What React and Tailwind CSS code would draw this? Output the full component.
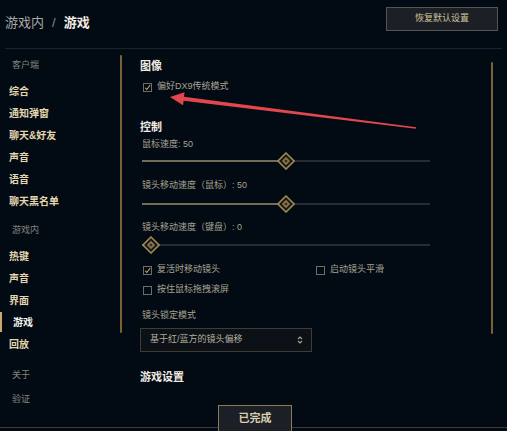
import React from 'react';

const Knob = () => (
    <svg width="18" height="18" viewBox="0 0 18 18" className="absolute top-1/2 -translate-y-1/2 -translate-x-1/2">
        <polygon points="9,1 17,9 9,17 1,9" fill="#15181c" stroke="#a08852" strokeWidth="1.6" />
        <polygon points="9,4.8 13.2,9 9,13.2 4.8,9" fill="#8a7242" />
        <polygon points="9,7.4 10.6,9 9,10.6 7.4,9" fill="#2a2620" />
    </svg>
);

const Slider = ({ value, className }) => (
    <div className={`relative h-[16px] w-[288px] ${className}`}>
        <div className="absolute left-0 right-0 top-1/2 h-[2px] -translate-y-1/2 bg-[#262b33]" />
        <div
            className="absolute left-0 top-1/2 h-[2px] -translate-y-1/2 bg-[#736c5a]"
            style={{ width: `calc(9px + ${value / 100} * (100% - 18px))` }}
        />
        <div className="absolute top-0 bottom-0" style={{ left: `calc(9px + ${value / 100} * (100% - 18px))` }}>
            <Knob />
        </div>
    </div>
);

const Checkbox = ({ checked, label, className = '' }) => (
    <div className={`flex items-center h-[18px] ${className}`}>
        <div className="w-[9px] h-[9px] border border-[#6f6d66] flex items-center justify-center ml-[3px]">
            {checked && (
                <svg width="9" height="9" viewBox="0 0 9 9">
                    <path d="M1.5 4.8 L3.6 7 L8 1.2" fill="none" stroke="#c9b35f" strokeWidth="1.3" />
                </svg>
            )}
        </div>
        <span className="ml-[5px] text-[9px] text-[#a8a392]">{label}</span>
    </div>
);

const NavHeader = ({ children, className = '' }) => (
    <div className={`h-[24px] flex items-center pl-[12px] text-[9px] text-[#85847e] ${className}`}>{children}</div>
);

const NavItem = ({ children, active }) => (
    <div className="relative h-[22px] flex items-center">
        {active && <div className="absolute left-0 top-[1px] bottom-[1px] w-[2px] bg-[#c8aa6e]" />}
        <span className={`text-[10px] font-bold ${active ? 'pl-[13px] text-[#f4f1ea]' : 'pl-[9px] text-[#e3d7b0]'}`}>{children}</span>
    </div>
);

const App = () => {
    return (
        <div className="relative w-[507px] h-[431px] overflow-hidden bg-[#020a14] flex flex-col font-['Liberation_Sans','Noto_Sans_CJK_SC',sans-serif]">
            <header className="h-[49px] mx-[5px] flex items-center justify-between border-b border-[#1b222b]">
                <div className="flex items-center text-[13px] pb-[2px]">
                    <span className="text-[#a9a9a6]">游戏内</span>
                    <span className="text-[#8b8b88] mx-[8px]">/</span>
                    <span className="text-[#f0ece2] font-bold">游戏</span>
                </div>
                <button className="w-[112px] h-[24px] mr-[4px] mb-[10px] border border-[#55544f] bg-[#1c2026] text-[9px] text-[#cfc39a]">
                    恢复默认设置
                </button>
            </header>

            <div className="flex-1 flex min-h-0">
                <nav className="w-[120px] pt-[5px] flex flex-col">
                    <NavHeader className="mb-[2px]">客户端</NavHeader>
                    <NavItem>综合</NavItem>
                    <NavItem>通知弹窗</NavItem>
                    <NavItem>聊天&amp;好友</NavItem>
                    <NavItem>声音</NavItem>
                    <NavItem>语音</NavItem>
                    <NavItem>聊天黑名单</NavItem>
                    <NavHeader className="mt-[7px] mb-[2px]">游戏内</NavHeader>
                    <NavItem>热键</NavItem>
                    <NavItem>声音</NavItem>
                    <NavItem>界面</NavItem>
                    <NavItem active>游戏</NavItem>
                    <NavItem>回放</NavItem>
                    <NavHeader className="mt-[9px]">关于</NavHeader>
                    <NavHeader>验证</NavHeader>
                </nav>
                <div className="w-[2px] h-[278px] mt-[6px] bg-[#7b6133] rounded-full" />

                <main className="flex-1 flex pl-[18px]">
                    <div className="flex-1 flex flex-col pt-[8px]">
                        <h3 className="h-[18px] flex items-center text-[11px] font-bold text-[#f0ece2]">图像</h3>
                        <Checkbox checked label="偏好DX9传统模式" className="mt-[3px]" />

                        <h3 className="h-[18px] mt-[22px] flex items-center text-[11px] font-bold text-[#f0ece2]">控制</h3>
                        <div className="h-[16px] mt-[1px] pl-[2px] flex items-center text-[9px] text-[#a8a392]">鼠标速度: 50</div>
                        <Slider value={50} className="ml-[2px]" />
                        <div className="h-[16px] mt-[9px] pl-[2px] flex items-center text-[9px] text-[#a8a392]">镜头移动速度（鼠标）: 50</div>
                        <Slider value={50} className="ml-[2px] mt-[2px]" />
                        <div className="h-[16px] mt-[8px] pl-[2px] flex items-center text-[9px] text-[#a8a392]">镜头移动速度（键盘）: 0</div>
                        <Slider value={0} className="ml-[2px] mt-[1px]" />

                        <div className="flex mt-[8px]">
                            <Checkbox checked label="复活时移动镜头" className="w-[173px]" />
                            <Checkbox label="启动镜头平滑" />
                        </div>
                        <Checkbox label="按住鼠标拖拽滚屏" className="mt-[2px]" />

                        <div className="h-[16px] mt-[9px] pl-[2px] flex items-center text-[9px] text-[#a8a392]">镜头锁定模式</div>
                        <div className="w-[172px] h-[24px] mt-[4px] border border-[#3f3c33] bg-[#0c1117] flex items-center justify-between pl-[9px] pr-[8px]">
                            <span className="text-[9px] text-[#b3ad9c]">基于红/蓝方的镜头偏移</span>
                            <svg width="6" height="10" viewBox="0 0 6 10">
                                <path d="M1 4 L3 2 L5 4 M1 6 L3 8 L5 6" fill="none" stroke="#a8a392" strokeWidth="1.1" />
                            </svg>
                        </div>

                        <h3 className="h-[18px] mt-[16px] flex items-center text-[11px] font-bold text-[#f0ece2]">游戏设置</h3>
                    </div>
                    <div className="w-[2px] h-[272px] mt-[13px] mr-[14px] bg-[#7b6133] rounded-full" />
                </main>
            </div>

            <div className="absolute left-0 right-0 bottom-[3px] h-[1px] bg-[#3b3a35]" />
            <button className="absolute left-[218px] bottom-0 w-[74px] h-[26px] border border-[#8a7a55] border-b-0 bg-[#1c2026] text-[11px] font-bold text-[#d8ceae]">
                已完成
            </button>

            <svg className="absolute inset-0 pointer-events-none" width="507" height="431" viewBox="0 0 507 431">
                <polygon
                    points="170,97 184.6,92.3 183.9,96.8 416.1,127.3 415.9,128.7 183.6,100.7 183.1,105.2"
                    fill="#e2474d"
                />
            </svg>
        </div>
    );
};

export default App;
